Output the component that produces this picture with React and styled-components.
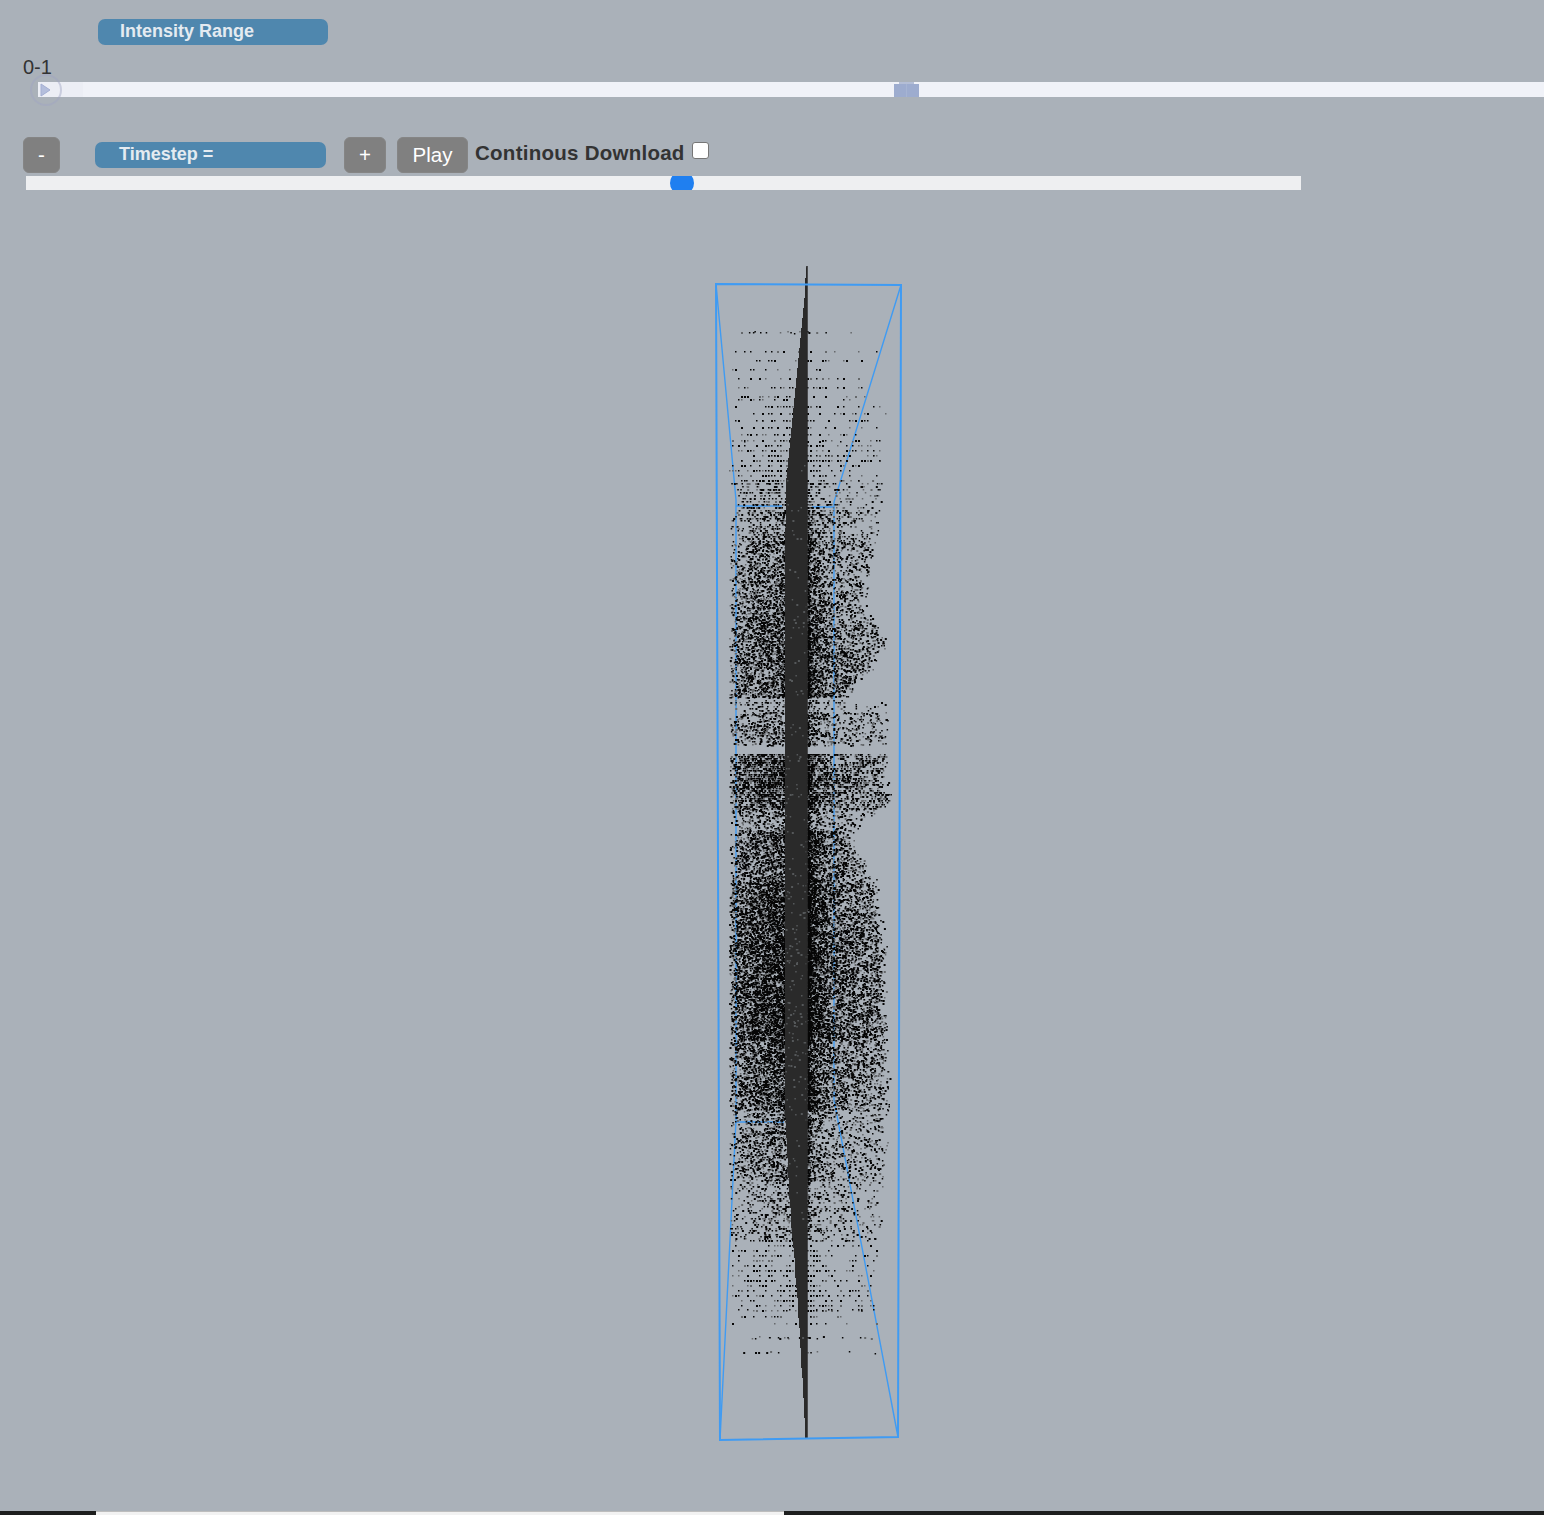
import React, { useMemo } from "react";
import styled, { createGlobalStyle } from "styled-components";

const GlobalStyle = createGlobalStyle`
  html, body {
    margin: 0;
    padding: 0;
    background: #aab1b9;
  }
  * {
    box-sizing: border-box;
  }
`;

const Page = styled.div`
  width: 1544px;
  height: 1515px;
  background: #aab1b9;
  font-family: "Liberation Sans", Arial, sans-serif;
  color: #333;
  display: flex;
  flex-direction: column;
  overflow: hidden;
`;

const Pill = styled.div`
  height: 26px;
  width: ${(p) => p.$width}px;
  margin-left: ${(p) => p.$left}px;
  padding-left: ${(p) => p.$pad}px;
  background: #4f87ae;
  border-radius: 7px;
  color: #e4ebf1;
  font-size: 18px;
  font-weight: 700;
  line-height: 24px;
  flex-shrink: 0;
`;

const IntensitySection = styled.section`
  padding-top: 19px;
`;

const RangeLabel = styled.div`
  margin: 10px 0 0 23px;
  height: 27px;
  font-size: 20px;
  line-height: 24px;
`;

const RangeTrack = styled.div`
  position: relative;
  margin-left: 38px;
  height: 15px;
  background: #f0f2f8;
`;

const RangeFilled = styled.div`
  width: 45px;
  height: 15px;
  background: #eceef5;
`;

const RangeHandle = styled.div`
  position: absolute;
  left: -8px;
  top: -8px;
  width: 32px;
  height: 32px;
  border: 2px solid rgba(160, 165, 195, 0.45);
  border-radius: 50%;
  display: flex;
  align-items: center;
  justify-content: center;
`;

const RangeStop = styled.div`
  position: absolute;
  left: 856px;
  top: 2px;
  width: 25px;
  height: 13px;
  background: #9daccf;
  &::before {
    content: "";
    position: absolute;
    left: 5px;
    top: -2px;
    width: 15px;
    height: 2px;
    background: #b4bed6;
  }
  &::after {
    content: "";
    position: absolute;
    left: 12px;
    top: 0;
    width: 1px;
    height: 13px;
    background: #a6b4d3;
  }
`;

const TimeRow = styled.div`
  display: flex;
  align-items: flex-start;
  margin: 40px 0 0 23px;
  height: 36px;
`;

const StepButton = styled.button`
  width: ${(p) => p.$width}px;
  height: 36px;
  margin-left: ${(p) => p.$left || 0}px;
  padding: 0;
  border: 1px solid #858585;
  border-radius: 6px;
  background: #808080;
  color: #fff;
  font-family: inherit;
  font-size: 20.5px;
  line-height: 32px;
  flex-shrink: 0;
`;

const TimeCell = styled.div`
  margin-top: 5px;
  margin-left: 35px;
  margin-right: 18px;
`;

const DownloadLabel = styled.label`
  margin-left: 7px;
  margin-top: 3px;
  font-size: 20.5px;
  font-weight: 700;
  line-height: 26px;
  letter-spacing: 0.26px;
  color: #333;
  white-space: nowrap;
`;

const DownloadBox = styled.input`
  appearance: none;
  width: 17px;
  height: 17px;
  margin: 5px 0 0 7px;
  background: #fff;
  border: 1px solid #767676;
  border-radius: 3px;
`;

const TimeTrack = styled.div`
  position: relative;
  margin: 3px 0 0 26px;
  width: 1275px;
  height: 14px;
  background: #eeeff1;
  overflow: hidden;
`;

const TimeThumb = styled.div`
  position: absolute;
  left: 644px;
  top: -5px;
  width: 24px;
  height: 24px;
  border-radius: 50%;
  background: #1f7ff0;
`;

const Plot = styled.svg`
  display: block;
  margin: 65px 0 0 700px;
  width: 220px;
  height: 1195px;
  flex-shrink: 0;
`;

const BottomStrip = styled.div`
  margin-top: auto;
  height: 4px;
  display: flex;
  background: #1d1e1e;
`;

const StripTab = styled.div`
  margin-left: 96px;
  width: 688px;
  background: #f2f2f2;
  border-top: 1px solid #bdbdbd;
`;

// [top, bottom, dots, row step]
const bands = [
  [331, 333, 16, 1],
  [350, 400, 110, 9],
  [400, 440, 150, 7],
  [440, 480, 320, 5],
  [480, 510, 380, 3],
  [510, 540, 650, 2],
  [540, 600, 2000, 1],
  [600, 625, 1000, 1],
  [625, 665, 2100, 1],
  [665, 697, 1500, 1],
  [700, 712, 170, 2],
  [712, 745, 1000, 1],
  [753, 770, 1000, 2],
  [770, 808, 2400, 2],
  [808, 830, 480, 1],
  [830, 880, 2500, 1],
  [880, 940, 4400, 1],
  [940, 1040, 8200, 1],
  [1040, 1110, 4000, 1],
  [1110, 1180, 1900, 1],
  [1180, 1240, 760, 2],
  [1240, 1310, 420, 5],
  [1310, 1325, 40, 7],
  [1336, 1338, 24, 1],
  [1351, 1353, 12, 1],
];

const rightEdge = [
  [330, 878], [450, 885], [500, 882], [560, 870], [610, 864], [640, 886],
  [670, 868], [697, 842], [703, 884], [745, 884], [760, 884], [805, 888],
  [820, 858], [840, 850], [880, 872], [940, 882], [1040, 884], [1100, 886],
  [1180, 882], [1355, 872],
];

const spineEdge = [
  [266, 806], [285, 805], [320, 802], [400, 794], [480, 786], [560, 785],
  [1100, 785], [1200, 790], [1300, 798], [1400, 804], [1438, 806],
];

const lookup = (table, y) => {
  for (let i = 1; i < table.length; i++) {
    const [y0, x0] = table[i - 1];
    const [y1, x1] = table[i];
    if (y <= y1) return x0 + ((x1 - x0) * (y - y0)) / (y1 - y0);
  }
  return table[table.length - 1][1];
};

// small seeded generator so the cloud is the same on every load
const makeRandom = (seed) => () => {
  seed = (seed * 1664525 + 1013904223) >>> 0;
  return seed / 4294967296;
};

const buildCloud = () => {
  const rand = makeRandom(20240);
  let dark = "";
  let soft = "";
  let glint = "";
  bands.forEach(([top, bottom, count, step]) => {
    for (let i = 0; i < count; i++) {
      let y = top + rand() * (bottom - top);
      y = Math.round(y / step) * step;
      const right = lookup(rightEdge, y) + (rand() - 0.5) * 10;
      const onLeft = rand() < 0.58;
      let x = onLeft
        ? 729 + Math.pow(rand(), 0.72) * 77
        : 807 + Math.pow(rand(), 1.9) * (right - 807);
      // the sparse rows sit on a coarse grid in the reference
      if (step > 4) x = Math.round(x / 3) * 3;
      const size = rand() < 0.35 ? 2 : 1.5;
      const dot = `M${x.toFixed(1)} ${y}h${size}v${size}h-${size}z`;
      const isSoft = rand() < 0.36;
      const onSpine = x >= lookup(spineEdge, y) && x <= 807;
      if (!isSoft) {
        dark += dot;
      } else if (!onSpine) {
        soft += dot;
      } else if (rand() < 0.08) {
        glint += dot;
      }
    }
  });
  return { dark, soft, glint };
};

const buildSpine = () => {
  let d = "M807 266V1438";
  for (let y = 1438; y >= 266; y -= 10) {
    d += `H${Math.round(lookup(spineEdge, y))}V${y}`;
  }
  return d + "Z";
};

const App = () => {
  const cloud = useMemo(buildCloud, []);
  const spine = useMemo(buildSpine, []);

  return (
    <Page>
      <GlobalStyle />

      <IntensitySection>
        <Pill $left={98} $width={230} $pad={22}>Intensity Range</Pill>
        <RangeLabel>0-1</RangeLabel>
        <RangeTrack>
          <RangeFilled />
          <RangeHandle>
            <svg width="12" height="14" viewBox="0 0 12 14">
              <path d="M1 1L10 7L1 13Z" fill="#b4bedc" stroke="#a3aed2" strokeWidth="1" />
            </svg>
          </RangeHandle>
          <RangeStop />
        </RangeTrack>
      </IntensitySection>

      <TimeRow>
        <StepButton $width={37}>-</StepButton>
        <TimeCell>
          <Pill $left={0} $width={231} $pad={24}>Timestep =</Pill>
        </TimeCell>
        <StepButton $width={42}>+</StepButton>
        <StepButton $width={71} $left={11}>Play</StepButton>
        <DownloadLabel htmlFor="continous">Continous Download</DownloadLabel>
        <DownloadBox id="continous" type="checkbox" />
      </TimeRow>

      <TimeTrack>
        <TimeThumb />
      </TimeTrack>

      <Plot viewBox="700 255 220 1195">
        <g fill="none" stroke="#3f9bf3" strokeWidth="1.4">
          <path d="M716 284L736 500V1120L720 1440" />
          <path d="M901 285L834 502V1100L898 1437" />
          <path d="M736 506L782 506M812 507L834 507" />
          <path d="M736 1122L784 1122" />
        </g>
        <path d={cloud.soft} fill="#66696c" />
        <path d={cloud.dark} fill="#060606" />
        <path d={spine} fill="#2a2a2a" />
        <path d={cloud.glint} fill="#55585a" />
        <path d="M807 266V1438" stroke="#2a2a2a" strokeWidth="1.5" fill="none" />
        <path d="M716 284L901 285L898 1437L720 1440Z" fill="none" stroke="#3f9bf3" strokeWidth="2" />
      </Plot>

      <BottomStrip>
        <StripTab />
      </BottomStrip>
    </Page>
  );
};

export default App;
